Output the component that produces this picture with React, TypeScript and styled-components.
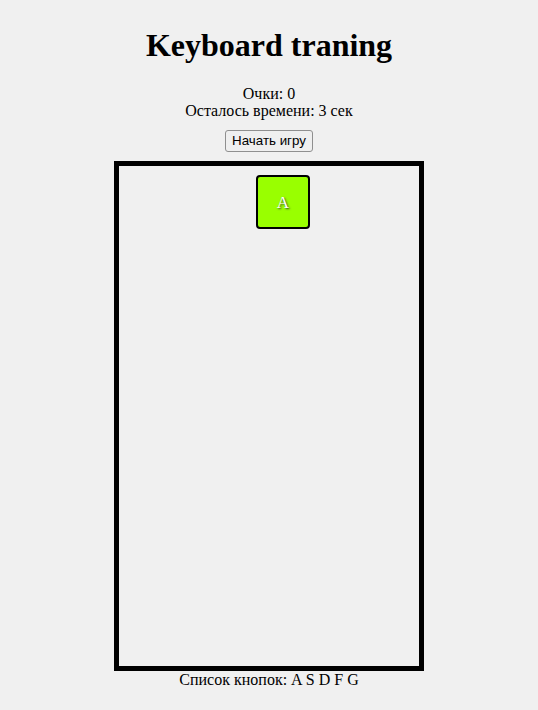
import React from "react";
import styled, { createGlobalStyle } from "styled-components";

const Global = createGlobalStyle`
  html, body { background: #f0f0f0; }
  body {
    margin: 8px;
    font-family: "Liberation Serif", "Times New Roman", serif;
    font-size: 16px;
    color: #000;
  }
`;

const Page = styled.div`
  display: flex;
  flex-direction: column;
  align-items: center;
  text-align: center;
`;

const Title = styled.h1`
  font-size: 32px;
  font-weight: bold;
  margin: 18.5px 0 21.44px;
`;

const Stats = styled.div`
  display: flex;
  flex-direction: column;
  line-height: 17px;
`;

const StartButton = styled.button`
  margin-top: 11px;
  font-family: "Liberation Sans", Arial, sans-serif;
  font-size: 13.33px;
  padding: 1px 6px;
  background: #efefef;
  border: 1px solid #8f8f8f;
  border-radius: 3px;
  color: #000;
  height: 22px;
  line-height: 18px;
`;

const Board = styled.div`
  position: relative;
  margin-top: 9px;
  width: 300px;
  height: 500px;
  border: 5px solid #000;
`;

const Key = styled.div<{ $x: number; $y: number }>`
  position: absolute;
  left: ${(p) => p.$x}px;
  top: ${(p) => p.$y}px;
  box-sizing: content-box;
  width: 50px;
  height: 47px;
  padding-top: 3px;
  border: 2px solid #000;
  border-radius: 4px;
  background: #99ff00;
  color: #fff;
  font-size: 17px;
  display: flex;
  align-items: center;
  justify-content: center;
  text-shadow: 1px 1px 2px #333;
`;

const KeyList = styled.div`
  line-height: 18px;
`;

export default function App() {
  return (
    <>
      <Global />
      <Page>
        <Title>Keyboard traning</Title>
        <Stats>
          <span>Очки: 0</span>
          <span>Осталось времени: 3 сек</span>
        </Stats>
        <StartButton>Начать игру</StartButton>
        <Board>
          <Key $x={137} $y={9}>A</Key>
        </Board>
        <KeyList>Список кнопок: A S D F G</KeyList>
      </Page>
    </>
  );
}
